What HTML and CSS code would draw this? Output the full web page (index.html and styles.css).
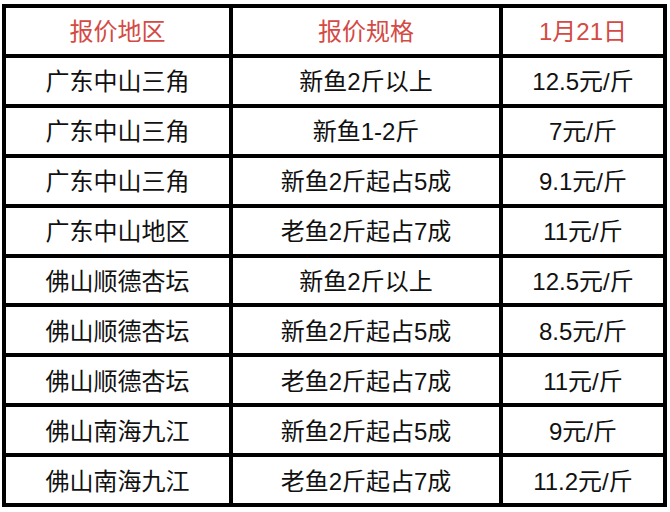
FILE: index.html
```html
<!DOCTYPE html>
<html lang="zh">
<head>
<meta charset="utf-8">
<link rel="stylesheet" href="styles.css">
</head>
<body>
<div class="table">
  <div class="cell head">报价地区</div>
  <div class="cell head">报价规格</div>
  <div class="cell head">1月21日</div>

  <div class="cell">广东中山三角</div>
  <div class="cell">新鱼2斤以上</div>
  <div class="cell">12.5元/斤</div>

  <div class="cell">广东中山三角</div>
  <div class="cell">新鱼1-2斤</div>
  <div class="cell">7元/斤</div>

  <div class="cell">广东中山三角</div>
  <div class="cell">新鱼2斤起占5成</div>
  <div class="cell">9.1元/斤</div>

  <div class="cell">广东中山地区</div>
  <div class="cell">老鱼2斤起占7成</div>
  <div class="cell">11元/斤</div>

  <div class="cell">佛山顺德杏坛</div>
  <div class="cell">新鱼2斤以上</div>
  <div class="cell">12.5元/斤</div>

  <div class="cell">佛山顺德杏坛</div>
  <div class="cell">新鱼2斤起占5成</div>
  <div class="cell">8.5元/斤</div>

  <div class="cell">佛山顺德杏坛</div>
  <div class="cell">老鱼2斤起占7成</div>
  <div class="cell">11元/斤</div>

  <div class="cell">佛山南海九江</div>
  <div class="cell">新鱼2斤起占5成</div>
  <div class="cell">9元/斤</div>

  <div class="cell">佛山南海九江</div>
  <div class="cell">老鱼2斤起占7成</div>
  <div class="cell">11.2元/斤</div>
</div>
</body>
</html>
```

FILE: styles.css
```css
html, body {
  margin: 0;
  padding: 0;
  background: #ffffff;
}

body {
  padding: 4px 0 0 2px;
  font-family: "Liberation Sans", "Noto Sans CJK SC", sans-serif;
}

.table {
  box-sizing: border-box;
  width: 665px;
  height: 503px;
  padding: 4px;
  background: #000000;
  display: grid;
  grid-template-columns: 223px 266px 160px;
  grid-template-rows: repeat(10, 1fr);
  gap: 4px;
}

.cell {
  background: #ffffff;
  display: flex;
  align-items: center;
  justify-content: center;
  font-size: 24px;
  color: #111111;
  white-space: nowrap;
  padding-bottom: 2px;
}

.head {
  color: #d44a45;
}
```
